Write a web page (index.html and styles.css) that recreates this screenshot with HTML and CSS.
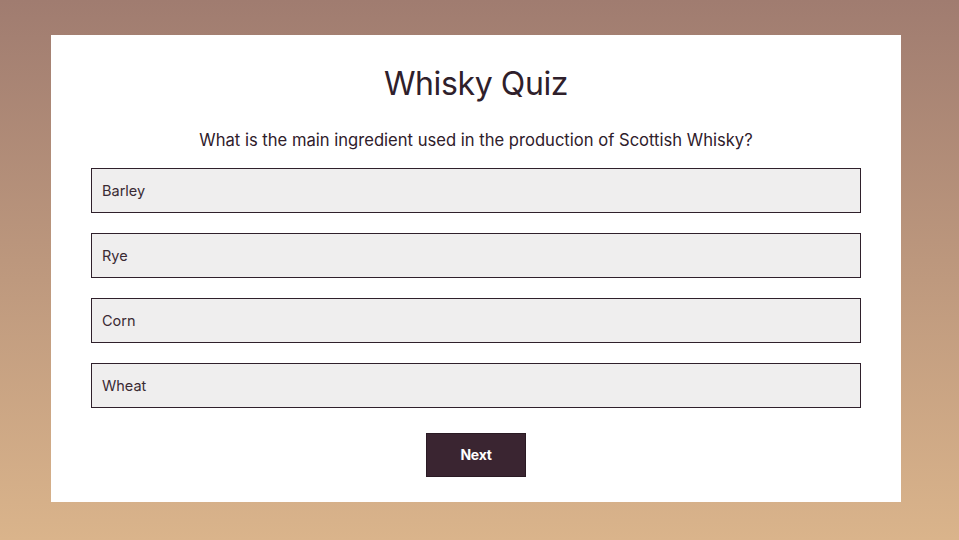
FILE: index.html
```html
<!DOCTYPE html>
<html lang="en">
<head>
<meta charset="utf-8">
<title>Whisky Quiz</title>
<link rel="stylesheet" href="styles.css">
</head>
<body>
<main class="card">
  <h1 class="title">Whisky Quiz</h1>
  <p class="question">What is the main ingredient used in the production of Scottish Whisky?</p>
  <ul class="options">
    <li class="option">Barley</li>
    <li class="option">Rye</li>
    <li class="option">Corn</li>
    <li class="option">Wheat</li>
  </ul>
  <div class="actions">
    <button class="next">Next</button>
  </div>
</main>
</body>
</html>
```
FILE: styles.css
```css
html, body {
  margin: 0;
  height: 100%;
}
body {
  background: linear-gradient(to bottom, #a07c70 0%, #dab48b 100%);
  font-family: "Inter", "Open Sans", sans-serif;
  color: #2f202b;
  padding: 35px 0 0 51px;
  box-sizing: border-box;
}
.card {
  width: 850px;
  height: 467px;
  box-sizing: border-box;
  background: #fff;
  padding: 24px 40px 25px;
}
.title {
  margin: 0;
  text-align: center;
  font-size: 32px;
  font-weight: 400;
  line-height: 50px;
  letter-spacing: -0.4px;
}
.question {
  margin: 18px 0 0;
  text-align: center;
  font-size: 16.6px;
  line-height: 26px;
}
.options {
  list-style: none;
  margin: 15px 0 0;
  padding: 0;
  display: flex;
  flex-direction: column;
  gap: 20px;
}
.option {
  height: 45px;
  box-sizing: border-box;
  border: 1px solid #2f202b;
  background: #efeeee;
  padding: 0 10px;
  display: flex;
  align-items: center;
  font-size: 14.5px;
  color: #3a2a33;
}
.actions {
  display: flex;
  justify-content: center;
  margin-top: 25px;
}
.next {
  width: 100px;
  height: 44px;
  background: #3a2531;
  border: 1px solid #2a1a24;
  color: #fff;
  font-family: "Inter", sans-serif;
  font-weight: 700;
  font-size: 14px;
  letter-spacing: -0.3px;
  padding: 0 0 2px;
  cursor: pointer;
}
```
